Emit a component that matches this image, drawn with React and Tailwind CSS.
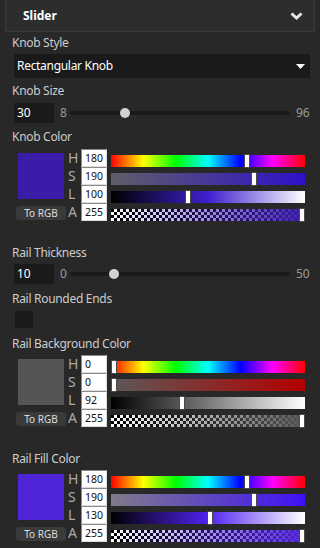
const HUE = 'linear-gradient(to right,#ff0000,#ffff00 16.67%,#00ff00 33.33%,#00ffff 50%,#0000ff 66.67%,#ff00ff 83.33%,#ff0000)';

function Label({ children, className = '' }) {
  return <div className={`h-[16px] leading-[16px] text-[12px] tracking-[-0.3px] text-[#cccccc] ${className}`}>{children}</div>;
}

function Chevron() {
  return (
    <svg width="13" height="8" viewBox="0 0 13 8">
      <polyline points="1.5,1.5 6.5,6 11.5,1.5" fill="none" stroke="#e6e6e6" strokeWidth="3" />
    </svg>
  );
}

function SliderRow({ value, min, max }) {
  const pct = ((value - min) / (max - min)) * 100;
  return (
    <div className="flex items-center ml-[14px] mr-[10px] h-[20px]">
      <div className="w-[40px] h-[20px] bg-[#1a1a1a] text-white text-[12px] leading-[20px] pl-[3px]">{value}</div>
      <div className="ml-[6px] w-[10px] text-[12px] text-[#9a9a9a]">{min}</div>
      <div className="relative flex-1 h-[4px] rounded-full bg-[#1a1a1a]">
        <div
          className="absolute top-1/2 w-[10px] h-[10px] -mt-[5px] -ml-[5px] rounded-full bg-[#d2d2d2]"
          style={{ left: `${pct}%` }}
        />
      </div>
      <div className="ml-[6px] w-[14px] text-[12px] text-[#9a9a9a]">{max}</div>
    </div>
  );
}

function ColorPicker({ color, values, satFrom, satTo, lightMid }) {
  const bars = [
    HUE,
    `linear-gradient(to right,${satFrom},${satTo})`,
    `linear-gradient(to right,#000000,${lightMid},#ffffff)`,
    `linear-gradient(to right,rgba(0,0,0,0),${color}), repeating-conic-gradient(#ffffff 0 25%, #000000 0 50%) 0 0/6px 6px`,
  ];
  return (
    <div className="flex ml-[16px] mr-[15px]">
      <div className="w-[50px] flex flex-col items-center">
        <div className="mt-[4px] w-[46px] h-[46px]" style={{ backgroundColor: color }} />
        <div className="mt-[7px] w-[50px] h-[14px] rounded-[3px] bg-[#3a3a3a] text-[10px] leading-[14px] text-center text-[#dddddd]">To RGB</div>
      </div>
      <div className="flex-1 flex flex-col">
        {['H', 'S', 'L', 'A'].map((k, i) => (
          <div key={k} className="flex h-[18px]">
            <div className="w-[15px] pl-[2px] text-[14px] leading-[18px] text-[#aaaaaa]">{k}</div>
            <div className="w-[26px] h-[18px] bg-white border border-t-[#8a8a8a] border-l-[#8a8a8a] border-r-[#dcdcdc] border-b-[#dcdcdc] text-[10.5px] leading-[16px] pl-[3px] text-[#111111]">
              {values[i]}
            </div>
            <div className="flex-1 ml-[4px] flex items-end">
              <div className="relative w-full h-[12px]" style={{ background: bars[i] }}>
                <div
                  className="absolute -top-[1px] w-[6px] h-[14px] bg-white border border-[#4a4a4a]"
                  style={{ left: `calc(${values[i] / 255} * (100% - 6px))` }}
                />
              </div>
            </div>
          </div>
        ))}
      </div>
    </div>
  );
}

export default function App() {
  return (
    <div className="w-[320px] h-[548px] overflow-hidden bg-[#282828] font-['Noto_Sans',sans-serif]">
      <div className="mx-[5px] h-[32px] bg-[#2d2d2d] border-x border-b border-[#3c3c3c] flex items-center justify-between pl-[17px] pr-[11px]">
        <span className="text-white font-bold text-[12px]">Slider</span>
        <Chevron />
      </div>

      <Label className="mt-[3px] ml-[12px]">Knob Style</Label>
      <div className="mt-[3px] ml-[14px] mr-[10px] h-[24px] bg-[#1a1a1a] flex items-center justify-between pl-[3px] pr-[5px]">
        <span className="text-white text-[12px] tracking-[-0.3px]">Rectangular Knob</span>
        <svg width="9" height="5" viewBox="0 0 9 5"><polygon points="0,0 9,0 4.5,5" fill="#ffffff" /></svg>
      </div>

      <Label className="mt-[5px] ml-[12px]">Knob Size</Label>
      <div className="mt-[4px]"><SliderRow value={30} min={8} max={96} /></div>

      <Label className="mt-[6px] ml-[12px]">Knob Color</Label>
      <div className="mt-[4px]">
        <ColorPicker color="#3b1ca9" values={[180, 190, 100, 255]} satFrom="#615d68" satTo="#3010c8" lightMid="#3f1fcf" />
      </div>

      <Label className="mt-[24px] ml-[12px]">Rail Thickness</Label>
      <div className="mt-[3px]"><SliderRow value={10} min={0} max={50} /></div>

      <Label className="mt-[7px] ml-[12px]">Rail Rounded Ends</Label>
      <div className="mt-[4px] ml-[15px] w-[18px] h-[17px] bg-[#1a1a1a]" />

      <Label className="mt-[8px] ml-[12px]">Rail Background Color</Label>
      <div className="mt-[3px]">
        <ColorPicker color="#555555" values={[0, 0, 92, 255]} satFrom="#5c5858" satTo="#b40000" lightMid="#7a7a7a" />
      </div>

      <Label className="mt-[24px] ml-[12px]">Rail Fill Color</Label>
      <div className="mt-[3px]">
        <ColorPicker color="#5025d8" values={[180, 190, 130, 255]} satFrom="#807c88" satTo="#4010f8" lightMid="#5022f0" />
      </div>
    </div>
  );
}
